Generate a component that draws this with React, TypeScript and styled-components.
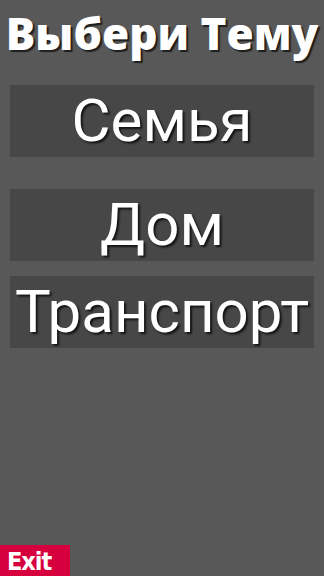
import styled, { createGlobalStyle } from "styled-components"

const Global = createGlobalStyle`
    html, body {
        margin: 0;
        padding: 0;
        background: #585858;
    }
    #root {
        min-height: 576px;
    }
`

const Screen = styled.div`
    position: relative;
    width: 324px;
    height: 576px;
    overflow: hidden;
    background: #585858;
    font-family: Roboto, "Liberation Sans", sans-serif;
`

const Title = styled.h1`
    margin: 0;
    padding-top: 7px;
    height: 85px;
    box-sizing: border-box;
    text-align: center;
    font-family: "Open Sans", "DejaVu Sans", sans-serif;
    font-weight: 800;
    font-size: 44px;
    line-height: 52px;
    color: #fff;
    white-space: nowrap;
    text-shadow: 2px 2px 1px #1e1e1e;
`

const Menu = styled.div`
    display: flex;
    flex-direction: column;
    padding: 0 10px 0 10px;
`

const TopicButton = styled.button<{ $gap: number }>`
    height: 72px;
    margin-bottom: ${p => p.$gap}px;
    border: none;
    padding: 0;
    background: #474747;
    color: #fff;
    font-family: Roboto, "Liberation Sans", sans-serif;
    font-size: 60px;
    line-height: 72px;
    white-space: nowrap;
    text-shadow: 2px 2px 2px #151515;
    cursor: pointer;
`

const ExitButton = styled.button`
    position: absolute;
    left: 0;
    bottom: 0;
    width: 70px;
    height: 31px;
    border: none;
    padding: 2px 0 0 7px;
    box-sizing: border-box;
    background: #d6003e;
    color: #fff;
    font-family: "DejaVu Sans Condensed", "DejaVu Sans", sans-serif;
    font-weight: bold;
    font-size: 25px;
    line-height: 29px;
    text-align: left;
    letter-spacing: -1px;
`

const topics = [
    { name: "Семья", gap: 32 },
    { name: "Дом", gap: 15 },
    { name: "Транспорт", gap: 0 },
]

const App = () => {
    return (
        <>
            <Global />
            <Screen>
                <Title>Выбери Тему</Title>
                <Menu>
                    {topics.map(t => (
                        <TopicButton key={t.name} $gap={t.gap}>{t.name}</TopicButton>
                    ))}
                </Menu>
                <ExitButton>Exit</ExitButton>
            </Screen>
        </>
    )
}

export default App
